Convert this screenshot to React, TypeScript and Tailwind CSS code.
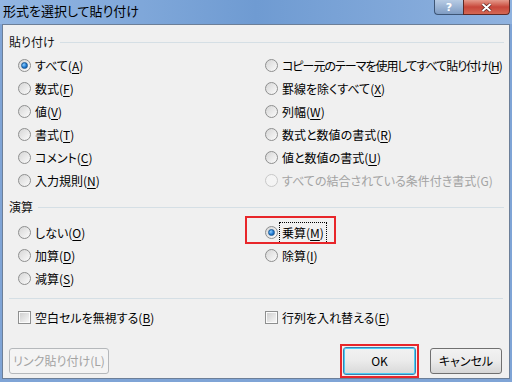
import type { ReactNode } from 'react';

const font = "font-['Noto_Sans_CJK_JP','Noto_Sans',sans-serif] [font-feature-settings:'palt']";

function Key({ k, plain = false }: { k: string; plain?: boolean }) {
  return (
    <>
      (<span className={plain ? '' : 'underline underline-offset-2'}>{k}</span>)
    </>
  );
}

function Radio({ checked = false, disabled = false }: { checked?: boolean; disabled?: boolean }) {
  return (
    <span
      className={[
        'relative flex h-[13px] w-[13px] shrink-0 items-center justify-center rounded-full border',
        disabled
          ? 'border-[#c8c8c8] bg-[#f4f4f4]'
          : 'border-[#8e8f8f] bg-gradient-to-br from-[#d6d6d6] to-[#fbfbfb]',
      ].join(' ')}
    >
      {checked && (
        <span className="h-[7px] w-[7px] rounded-full border border-[#1c5a96] bg-[radial-gradient(circle_at_35%_35%,#8fd0ff,#1f7ad3_55%,#0d4a8c)]" />
      )}
    </span>
  );
}

function Check() {
  return (
    <span className="flex h-[13px] w-[13px] shrink-0 items-center justify-center border border-[#8e8f8f] bg-[#fbfbfb]">
      <span className="h-[9px] w-[9px] bg-gradient-to-br from-[#d0d0d0] to-[#f6f6f6]" />
    </span>
  );
}

function Opt({
  label,
  checked,
  disabled,
}: {
  label: ReactNode;
  checked?: boolean;
  disabled?: boolean;
}) {
  return (
    <div className="flex h-[23px] items-center gap-[4px] whitespace-nowrap">
      <Radio checked={checked} disabled={disabled} />
      <span className={disabled ? 'text-[#a3a3a3]' : 'text-black'}>{label}</span>
    </div>
  );
}

function GroupHeader({ title }: { title: string }) {
  return (
    <div className="flex h-[18px] items-center gap-[5px] pl-[6px] pr-[5px]">
      <span className="text-[#111]">{title}</span>
      <span className="h-px flex-1 bg-[#d5dfe5]" />
    </div>
  );
}

export default function App() {
  return (
    <div className={`flex h-[382px] w-[512px] flex-col bg-[#7fa4d6] text-[12px] leading-none ${font}`}>
      {/* title bar */}
      <div className="flex h-[24px] items-start justify-between bg-gradient-to-r from-[#93b6e2] via-[#6f9bd2] to-[#8fb2df]">
        <span className="pl-[3px] pt-[4px] text-[13px] text-black">形式を選択して貼り付け</span>
        <div className="mr-[2px] flex h-[15px]">
          <div className="flex w-[29px] items-center justify-center overflow-hidden rounded-bl-[4px] border border-r-0 border-t-0 border-[#3d5575] bg-gradient-to-b from-[#b7cbe4] to-[#7f9cc3] font-['DejaVu_Sans',sans-serif] text-[11px] font-bold leading-none text-white">
            ?
          </div>
          <div className="flex w-[47px] items-center justify-center rounded-br-[4px] border border-t-0 border-[#5e2a26] bg-gradient-to-b from-[#e49a8c] via-[#c7463a] to-[#d46753]">
            <svg width="11" height="9" viewBox="0 0 11 9">
              <path d="M1.5 1 L9.5 8 M9.5 1 L1.5 8" stroke="#4a1a16" strokeWidth="3.2" />
              <path d="M1.5 1 L9.5 8 M9.5 1 L1.5 8" stroke="#fff" strokeWidth="2" />
            </svg>
          </div>
        </div>
      </div>

      {/* client */}
      <div className="mx-[2px] mb-[3px] flex flex-1 flex-col border border-[#6c7f98] bg-[#f0f0f0]">
        <div className="mt-[8px]">
          <GroupHeader title="貼り付け" />
        </div>
        <div className="mt-[3px] grid grid-cols-[247px_1fr] pl-[15px]">
          <div className="flex flex-col">
            <Opt label={<>すべて<Key k="A" /></>} checked />
            <Opt label={<>数式<Key k="F" /></>} />
            <Opt label={<>値<Key k="V" /></>} />
            <Opt label={<>書式<Key k="T" /></>} />
            <Opt label={<>コメント<Key k="C" /></>} />
            <Opt label={<>入力規則<Key k="N" /></>} />
          </div>
          <div className="flex flex-col">
            <Opt label={<span className="tracking-[-1px]">コピー元のテーマを使用してすべて貼り付け<Key k="H" /></span>} />
            <Opt label={<>罫線を除くすべて<Key k="X" /></>} />
            <Opt label={<>列幅<Key k="W" /></>} />
            <Opt label={<>数式と数値の書式<Key k="R" /></>} />
            <Opt label={<>値と数値の書式<Key k="U" /></>} />
            <Opt label={<>すべての結合されている条件付き書式<Key k="G" plain /></>} disabled />
          </div>
        </div>

        <div className="mt-[6px]">
          <GroupHeader title="演算" />
        </div>
        <div className="mt-[5px] grid grid-cols-[247px_1fr] pl-[15px]">
          <div className="flex flex-col">
            <Opt label={<>しない<Key k="O" /></>} />
            <Opt label={<>加算<Key k="D" /></>} />
            <Opt label={<>減算<Key k="S" /></>} />
          </div>
          <div className="flex flex-col">
            <div className="relative flex h-[23px] items-center gap-[2px]">
              <Radio checked />
              <span className="px-[2px] py-[4px] outline outline-1 outline-dotted outline-black">
                乗算<Key k="M" />
              </span>
              <span className="pointer-events-none absolute left-[-20px] top-[-5px] h-[28px] w-[91px] border-2 border-[#e8262a]" />
            </div>
            <Opt label={<>除算<Key k="I" /></>} />
          </div>
        </div>

        <div className="mx-[6px] mt-[8px] h-px bg-[#d5dfe5]" />

        <div className="mt-[7px] grid grid-cols-[247px_1fr] pl-[15px]">
          <div className="flex h-[23px] items-center gap-[4px]">
            <Check />
            <span>空白セルを無視する<Key k="B" /></span>
          </div>
          <div className="flex h-[23px] items-center gap-[4px]">
            <Check />
            <span>行列を入れ替える<Key k="E" /></span>
          </div>
        </div>

        <div className="mt-[15px] flex items-center justify-between pl-[6px] pr-[7px]">
          <button className="flex h-[26px] w-[100px] items-center justify-center rounded-[3px] border border-[#b5b8bb] bg-[#f4f4f4] text-[#a3a3a3]">
            リンク貼り付け(L)
          </button>
          <div className="flex items-center gap-[11px]">
            <div className="border-2 border-[#e8262a] p-[1px]">
              <button className="flex h-[28px] w-[73px] items-center justify-center rounded-[3px] border border-[#3c7fb1] bg-gradient-to-b from-[#f2f2f2] via-[#ebebeb] to-[#d8d8d8] text-black shadow-[inset_0_0_0_1px_#48cff5]">
                OK
              </button>
            </div>
            <button className="flex h-[26px] w-[72px] items-center justify-center rounded-[3px] border border-[#707070] bg-gradient-to-b from-[#f2f2f2] via-[#ebebeb] to-[#d6d6d6] text-black">
              キャンセル
            </button>
          </div>
        </div>
      </div>
    </div>
  );
}
